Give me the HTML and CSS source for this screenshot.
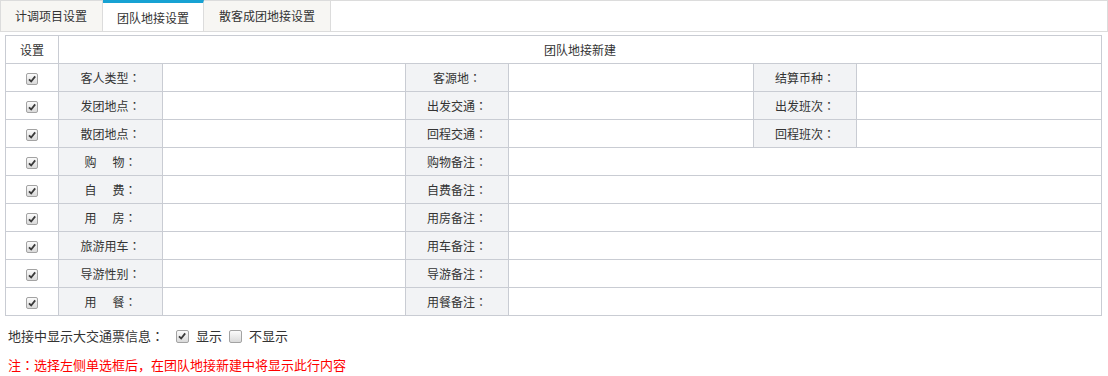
FILE: index.html
```html
<!DOCTYPE html>
<html lang="zh-CN">
<head>
  <meta charset="UTF-8" />
  <title>团队地接设置</title>
  <link rel="stylesheet" href="styles.css">
</head>
<body>

<ul class="tabs">
  <li class="tab">计调项目设置</li>
  <li class="tab active">团队地接设置</li>
  <li class="tab">散客成团地接设置</li>
</ul>

<table class="grid">
  <colgroup>
    <col style="width:53px">
    <col style="width:104px">
    <col style="width:243px">
    <col style="width:103px">
    <col style="width:245px">
    <col style="width:103px">
    <col style="width:245px">
  </colgroup>
  <tr class="head">
    <td>设置</td>
    <td colspan="6">团队地接新建</td>
  </tr>
  <tr>
    <td><span class="cb on"><svg viewBox="0 0 11 11"><path d="M2.2 5.8l2.4 2.4 4.4-5.6"/></svg></span></td>
    <td class="lbl">客人类型<span class="colon">：</span></td><td></td>
    <td class="lbl">客源地<span class="colon">：</span></td><td></td>
    <td class="lbl">结算币种<span class="colon">：</span></td><td></td>
  </tr>
  <tr>
    <td><span class="cb on"><svg viewBox="0 0 11 11"><path d="M2.2 5.8l2.4 2.4 4.4-5.6"/></svg></span></td>
    <td class="lbl">发团地点<span class="colon">：</span></td><td></td>
    <td class="lbl">出发交通<span class="colon">：</span></td><td></td>
    <td class="lbl">出发班次<span class="colon">：</span></td><td></td>
  </tr>
  <tr>
    <td><span class="cb on"><svg viewBox="0 0 11 11"><path d="M2.2 5.8l2.4 2.4 4.4-5.6"/></svg></span></td>
    <td class="lbl">散团地点<span class="colon">：</span></td><td></td>
    <td class="lbl">回程交通<span class="colon">：</span></td><td></td>
    <td class="lbl">回程班次<span class="colon">：</span></td><td></td>
  </tr>
  <tr>
    <td><span class="cb on"><svg viewBox="0 0 11 11"><path d="M2.2 5.8l2.4 2.4 4.4-5.6"/></svg></span></td>
    <td class="lbl">购<span class="gap"></span>物<span class="colon">：</span></td><td></td>
    <td class="lbl">购物备注<span class="colon">：</span></td><td colspan="3"></td>
  </tr>
  <tr>
    <td><span class="cb on"><svg viewBox="0 0 11 11"><path d="M2.2 5.8l2.4 2.4 4.4-5.6"/></svg></span></td>
    <td class="lbl">自<span class="gap"></span>费<span class="colon">：</span></td><td></td>
    <td class="lbl">自费备注<span class="colon">：</span></td><td colspan="3"></td>
  </tr>
  <tr>
    <td><span class="cb on"><svg viewBox="0 0 11 11"><path d="M2.2 5.8l2.4 2.4 4.4-5.6"/></svg></span></td>
    <td class="lbl">用<span class="gap"></span>房<span class="colon">：</span></td><td></td>
    <td class="lbl">用房备注<span class="colon">：</span></td><td colspan="3"></td>
  </tr>
  <tr>
    <td><span class="cb on"><svg viewBox="0 0 11 11"><path d="M2.2 5.8l2.4 2.4 4.4-5.6"/></svg></span></td>
    <td class="lbl">旅游用车<span class="colon">：</span></td><td></td>
    <td class="lbl">用车备注<span class="colon">：</span></td><td colspan="3"></td>
  </tr>
  <tr>
    <td><span class="cb on"><svg viewBox="0 0 11 11"><path d="M2.2 5.8l2.4 2.4 4.4-5.6"/></svg></span></td>
    <td class="lbl">导游性别<span class="colon">：</span></td><td></td>
    <td class="lbl">导游备注<span class="colon">：</span></td><td colspan="3"></td>
  </tr>
  <tr>
    <td><span class="cb on"><svg viewBox="0 0 11 11"><path d="M2.2 5.8l2.4 2.4 4.4-5.6"/></svg></span></td>
    <td class="lbl">用<span class="gap"></span>餐<span class="colon">：</span></td><td></td>
    <td class="lbl">用餐备注<span class="colon">：</span></td><td colspan="3"></td>
  </tr>
</table>

<div class="ticket">
  <span class="title">地接中显示大交通票信息<span class="colon">：</span></span>
  <span class="cb big on"><svg viewBox="0 0 11 11"><path d="M2.2 5.8l2.4 2.4 4.4-5.6"/></svg></span>
  <span>显示</span>
  <span class="cb big"></span>
  <span>不显示</span>
</div>

<p class="note">注<span class="colon">：</span>选择左侧单选框后，在团队地接新建中将显示此行内容</p>

</body>
</html>
```

FILE: styles.css
```css
* {
  margin: 0; padding: 0; box-sizing: border-box;
}
body {
  background: #fff;
  color: #333;
  font-family: "Noto Sans CJK SC", "Microsoft YaHei", sans-serif;
  font-size: 12px;
}
/* centred full-width colon, as on Windows fonts */
.colon {
  font-family: "Noto Sans CJK TC", sans-serif;
  font-feature-settings: "locl" 0;
}
.tabs {
  list-style: none;
  display: flex;
  height: 32px;
  border: 1px solid #dcdcdc;
}
.tab {
  padding: 0 15px;
  line-height: 30px;
  border-right: 1px solid #dcdcdc;
  background: #f7f6f3;
  color: #333;
}
.tab:first-child {
  padding-left: 14px;
}
.tab.active {
  background: #fff;
  margin-top: -1px;
  height: 31px;
  line-height: 29px;
  border-top: 3px solid #17a2d3;
  padding: 0 14px;
}
.grid {
  margin: 3px 0 0 5px;
  width: 1097px;
  table-layout: fixed;
  border-collapse: collapse;
}
.grid td {
  border: 1px solid #c9ccd3;
  height: 28px;
  padding: 0;
  text-align: center;
  vertical-align: middle;
}
.grid td.lbl {
  background: #f2f3f5;
}
.gap {
  display: inline-block;
  width: 16px;
}
.cb {
  display: inline-block;
  width: 12px;
  height: 12px;
  border: 1px solid #a3a3a3;
  border-radius: 2px;
  background: linear-gradient(#fbfbfb, #dadada);
  vertical-align: middle;
  position: relative;
  top: -1px;
}
.cb svg {
  display: block;
  width: 10px;
  height: 10px;
}
.cb svg path {
  fill: none;
  stroke: #3a3a3a;
  stroke-width: 2;
}
.cb.big {
  width: 13px;
  height: 13px;
}
.ticket {
  display: flex;
  align-items: center;
  gap: 7px;
  padding: 8px 0 0 8px;
  line-height: 24px;
  font-size: 13px;
}
.ticket .cb {
  top: 0;
}
.ticket .title {
  margin-right: 5px;
}
.note {
  margin: 5px 0 0 8px;
  line-height: 24px;
  font-size: 13px;
  color: #f00;
}
```
